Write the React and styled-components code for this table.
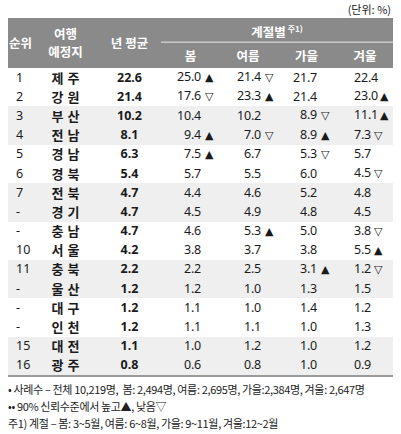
import React from 'react';
import styled, { createGlobalStyle } from 'styled-components';

const GlobalStyle = createGlobalStyle`
  body {
    margin: 0;
    background: #fff;
    font-family: "Noto Sans", "Noto Sans CJK KR", sans-serif;
    color: #1a1a1a;
  }
`;

const Wrapper = styled.div`
  width: 401px;
  padding: 2px 8px 0 8px;
  box-sizing: border-box;
`;

const Unit = styled.div`
  text-align: right;
  font-family: "Noto Sans CJK KR", sans-serif;
  font-size: 11px;
  line-height: 15px;
  padding-right: 2px;
  margin-bottom: 1px;
`;

const Table = styled.table`
  width: 385px;
  border-collapse: collapse;
  table-layout: fixed;
  border-bottom: 2px solid #9a9a9a;
`;

const Th = styled.th`
  background: #8a8a8a;
  color: #fff;
  font-family: "Noto Sans CJK KR", sans-serif;
  font-size: 12.5px;
  font-weight: 700;
  text-align: center;
  padding: 0;
  line-height: 18px;
  height: ${p => p.h || 25}px;
  box-shadow: ${p => p.line ? 'inset 0 -1.5px 0 #c8c8c8' : 'none'};
`;

const Sup = styled.sup`
  font-size: 8px;
  vertical-align: 5px;
  margin-left: 2px;
`;

const Row = styled.tr`
  background: ${p => p.shade ? '#efefef' : '#fff'};
`;

const Td = styled.td`
  height: 19.2px;
  padding: 0;
  font-size: 12.5px;
  line-height: 16px;
  white-space: nowrap;
`;

const Rank = styled(Td)`
  padding-left: 8px;
`;

const Name = styled(Td)`
  font-family: "Noto Sans CJK KR", sans-serif;
  font-weight: 700;
  font-size: 13px;
  text-align: center;
  letter-spacing: 4px;
  text-indent: 4px;
`;

const Avg = styled(Td)`
  font-weight: 700;
  text-align: center;
`;

const Val = styled(Td)`
  padding-left: ${p => p.pad}px;
  letter-spacing: -0.2px;
`;

const Num = styled.span`
  display: inline-block;
  ${p => p.left ? 'min-width: 18px;' : 'width: 24px;'}
  text-align: ${p => p.left ? 'left' : 'right'};
`;

const Mark = styled.span`
  display: inline-block;
  font-size: 11px;
  margin-left: ${p => p.tight ? 2 : 4}px;
  font-family: "DejaVu Sans", sans-serif;
`;

const Notes = styled.div`
  padding-top: 4px;
  font-family: "Noto Sans CJK KR", sans-serif;
  font-size: 11px;
  line-height: 17px;
  color: #222;
  letter-spacing: -0.35px;
`;

const rows = [
  ['1', '제주', '22.6', ['25.0', 'u'], ['21.4', 'd'], ['21.7'], ['22.4']],
  ['2', '강원', '21.4', ['17.6', 'd'], ['23.3', 'u'], ['21.4'], ['23.0', 'u']],
  ['3', '부산', '10.2', ['10.4'], ['10.2'], ['8.9', 'd'], ['11.1', 'u']],
  ['4', '전남', '8.1', ['9.4', 'u'], ['7.0', 'd'], ['8.9', 'u'], ['7.3', 'd']],
  ['5', '경남', '6.3', ['7.5', 'u'], ['6.7'], ['5.3', 'd'], ['5.7']],
  ['6', '경북', '5.4', ['5.7'], ['5.5'], ['6.0'], ['4.5', 'd']],
  ['7', '전북', '4.7', ['4.4'], ['4.6'], ['5.2'], ['4.8']],
  ['-', '경기', '4.7', ['4.5'], ['4.9'], ['4.8'], ['4.5']],
  ['-', '충남', '4.7', ['4.6'], ['5.3', 'u'], ['5.0'], ['3.8', 'd']],
  ['10', '서울', '4.2', ['3.8'], ['3.7'], ['3.8'], ['5.5', 'u']],
  ['11', '충북', '2.2', ['2.2'], ['2.5'], ['3.1', 'u'], ['1.2', 'd']],
  ['-', '울산', '1.2', ['1.2'], ['1.0'], ['1.3'], ['1.5']],
  ['-', '대구', '1.2', ['1.1'], ['1.0'], ['1.4'], ['1.2']],
  ['-', '인천', '1.2', ['1.1'], ['1.1'], ['1.0'], ['1.3']],
  ['15', '대전', '1.1', ['1.0'], ['1.2'], ['1.0'], ['1.2']],
  ['16', '광주', '0.8', ['0.6'], ['0.8'], ['1.0'], ['0.9']],
];

const pads = [16, 17, 17, 17];

function Cell({ value, mark, pad, left }) {
  return (
    <Val pad={pad}>
      <Num left={left}>{value}</Num>
      {mark && <Mark tight={left}>{mark === 'u' ? '▲' : '▽'}</Mark>}
    </Val>
  );
}

export default function App() {
  return (
    <Wrapper>
      <GlobalStyle />
      <Unit>(단위: %)</Unit>
      <Table>
        <colgroup>
          <col style={{ width: 25 }} />
          <col style={{ width: 65 }} />
          <col style={{ width: 63 }} />
          <col style={{ width: 59 }} />
          <col style={{ width: 56 }} />
          <col style={{ width: 61 }} />
          <col style={{ width: 56 }} />
        </colgroup>
        <thead>
          <tr>
            <Th rowSpan={2} h={50}>순위</Th>
            <Th rowSpan={2} h={50}>여행<br />예정지</Th>
            <Th rowSpan={2} h={50}>년 평균</Th>
            <Th colSpan={4} line>계절별<Sup>주1)</Sup></Th>
          </tr>
          <tr>
            <Th>봄</Th>
            <Th>여름</Th>
            <Th>가을</Th>
            <Th>겨울</Th>
          </tr>
        </thead>
        <tbody>
          {rows.map((r, i) => (
            <Row key={i} shade={i >= 2 && Math.floor((i - 2) / 2) % 2 === 0}>
              <Rank>{r[0]}</Rank>
              <Name>{r[1]}</Name>
              <Avg>{r[2]}</Avg>
              {r.slice(3).map((c, j) => (
                <Cell key={j} value={c[0]} mark={c[1]} pad={pads[j]} left={j === 3} />
              ))}
            </Row>
          ))}
        </tbody>
      </Table>
      <Notes>
        <div>• 사례수 – 전체 10,219명,&nbsp; 봄: 2,494명, 여름: 2,695명, 가을:2,384명, 겨울: 2,647명</div>
        <div>•• 90% 신뢰수준에서 높고▲, 낮음▽</div>
        <div>주1) 계절 – 봄: 3~5월, 여름: 6~8월, 가을: 9~11월, 겨울:12~2월</div>
      </Notes>
    </Wrapper>
  );
}
